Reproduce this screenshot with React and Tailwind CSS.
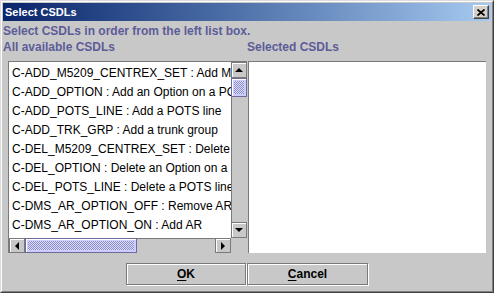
import React from "react";

const rows = [
  "C-ADD_M5209_CENTREX_SET : Add M5209 Centrex Set",
  "C-ADD_OPTION : Add an Option on a POTS line",
  "C-ADD_POTS_LINE : Add a POTS line",
  "C-ADD_TRK_GRP : Add a trunk group",
  "C-DEL_M5209_CENTREX_SET : Delete M5209 Centrex Set",
  "C-DEL_OPTION : Delete an Option on a POTS line",
  "C-DEL_POTS_LINE : Delete a POTS line",
  "C-DMS_AR_OPTION_OFF : Remove AR Option",
  "C-DMS_AR_OPTION_ON : Add AR",
  "C-DMS_CFB_OPTION : Call Forward Busy",
];

function Arrow({ dir }) {
  const pts = {
    up: "4,1 8,5 0,5",
    down: "0,1 8,1 4,5",
    left: "5,0 5,8 1,4",
    right: "1,0 1,8 5,4",
  }[dir];
  const vert = dir === "up" || dir === "down";
  return (
    <svg width={vert ? 8 : 6} height={vert ? 6 : 8} viewBox={vert ? "0 0 8 6" : "0 0 6 8"}>
      <polygon points={pts} fill="#000" />
    </svg>
  );
}

function ArrowButton({ dir, className }) {
  return (
    <div className={"flex items-center justify-center bg-[#c8c8c8] border border-[#7a7a7a] shadow-[inset_1px_1px_0_#fff] " + className}>
      <Arrow dir={dir} />
    </div>
  );
}

function Thumb({ className }) {
  return (
    <div className={"border border-[#6b6b9e] bg-[#ccccff] p-[2px] shadow-[inset_1px_1px_0_#fff] " + className}>
      <div className="w-full h-full bg-[repeating-conic-gradient(#8c8cc4_0_25%,#ddddff_0_50%)] bg-[length:2px_2px]" />
    </div>
  );
}

export default function App() {
  return (
    <div className="w-[494px] h-[293px] border border-t-[#dcdcdc] border-l-[#dcdcdc] border-r-[#404040] border-b-[#404040] font-['Liberation_Sans',Arial,sans-serif]">
      <div className="w-full h-full border border-t-white border-l-white border-r-[#808080] border-b-[#808080] bg-[#c8c8c8] p-px flex flex-col">
        {/* title bar */}
        <div className="h-[18px] flex items-center justify-between pl-[2px] pr-[2px] bg-gradient-to-r from-[#0a246a] to-[#a6caf0]">
          <span className="text-white font-bold text-[11px] leading-none">Select CSDLs</span>
          <div className="w-[16px] h-[14px] bg-[#d4d0c8] border border-t-white border-l-white border-r-[#404040] border-b-[#404040] shadow-[inset_-1px_-1px_0_#808080] flex items-center justify-center">
            <svg width="8" height="7" viewBox="0 0 8 7">
              <path d="M0.5 0.5 L7.5 6.5 M7.5 0.5 L0.5 6.5" stroke="#000" strokeWidth="1.7" />
            </svg>
          </div>
        </div>

        {/* labels */}
        <div className="mt-[2px] h-[16px] leading-[16px] text-[12px] font-bold text-[#5c5c99] whitespace-nowrap">
          Select CSDLs in order from the left list box.
        </div>
        <div className="grid grid-cols-[244px_1fr] h-[16px] leading-[16px] text-[12px] font-bold text-[#5c5c99] whitespace-nowrap">
          <span>All available CSDLs</span>
          <span>Selected CSDLs</span>
        </div>

        {/* lists */}
        <div className="mt-[6px] flex gap-px pl-[5px]">
          <div className="w-[239px] h-[192px] border-t border-l border-[#7a7a7a] bg-white flex flex-col">
            <div className="flex flex-1 min-h-0">
              <div className="flex-1 min-w-0 overflow-hidden pt-[2px] text-[12px] text-black">
                {rows.map((r) => (
                  <div key={r} className="h-[19px] leading-[19px] pl-[3px] whitespace-nowrap">{r}</div>
                ))}
              </div>
              <div className="w-[16px] bg-[#c8c8c8] border-l border-[#7a7a7a] flex flex-col">
                <ArrowButton dir="up" className="h-[16px] w-[16px] -ml-px" />
                <Thumb className="h-[19px] w-[16px] -ml-px" />
                <div className="flex-1" />
                <ArrowButton dir="down" className="h-[16px] w-[16px] -ml-px" />
              </div>
            </div>
            <div className="h-[15px] flex bg-[#c8c8c8]">
              <div className="flex-1 flex border-t border-[#7a7a7a]">
                <ArrowButton dir="left" className="w-[16px] h-[15px] -mt-px" />
                <Thumb className="w-[112px] h-[15px] -mt-px" />
                <div className="flex-1" />
                <ArrowButton dir="right" className="w-[16px] h-[15px] -mt-px" />
              </div>
              <div className="w-[16px] bg-[#c8c8c8]" />
            </div>
          </div>
          <div className="w-[238px] h-[192px] border-t border-l border-[#7a7a7a] bg-white" />
        </div>

        {/* buttons */}
        <div className="mt-[10px] flex justify-center gap-px">
          <button className="w-[120px] h-[22px] bg-[#c8c8c8] border border-[#7a7a7a] shadow-[inset_1px_1px_0_#fff,1px_1px_0_#fff] text-[12px] font-bold text-black">
            <span className="underline underline-offset-2">O</span>K
          </button>
          <button className="w-[121px] h-[22px] bg-[#c8c8c8] border border-[#7a7a7a] shadow-[inset_1px_1px_0_#fff,1px_1px_0_#fff] text-[12px] font-bold text-black">
            <span className="underline underline-offset-2">C</span>ancel
          </button>
        </div>
      </div>
    </div>
  );
}
